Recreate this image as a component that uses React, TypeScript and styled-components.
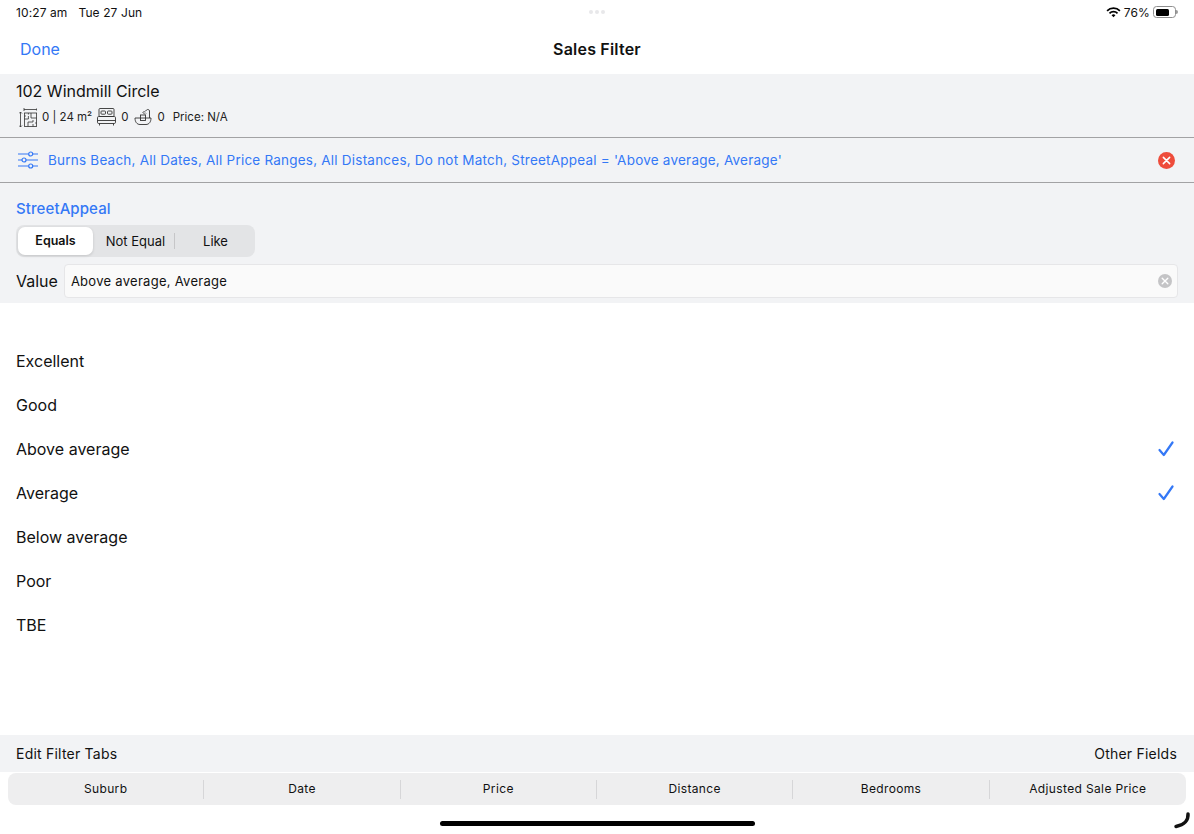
import React from 'react';
import styled, {createGlobalStyle} from 'styled-components';

const BLUE = '#3478f6';
const FONT = 'Inter, "Liberation Sans", sans-serif';

const GlobalStyle = createGlobalStyle`
  html, body {
    margin: 0;
    padding: 0;
    background: #fff;
  }
  body {
    font-family: ${FONT};
    color: #111;
  }
`;

const Screen = styled.div`
  width: 1194px;
  height: 834px;
  display: flex;
  flex-direction: column;
  overflow: hidden;
  position: relative;
`;

const StatusBar = styled.div`
  height: 24px;
  flex: none;
  display: grid;
  grid-template-columns: 1fr auto 1fr;
  align-items: center;
  padding: 0 16px 0 16px;
  font-size: 12px;
  letter-spacing: 0.1px;
`;

const StatusLeft = styled.div`
  display: flex;
  gap: 11px;
`;

const Dots = styled.div`
  display: flex;
  gap: 2px;
`;

const Dot = styled.span`
  width: 4px;
  height: 4px;
  border-radius: 50%;
  background: #e8e8ea;
`;

const StatusRight = styled.div`
  display: flex;
  justify-content: flex-end;
  align-items: center;
  gap: 3px;
`;

const Battery = styled.div`
  width: 23px;
  height: 12px;
  border: 1px solid #8e8e8e;
  border-radius: 3.5px;
  padding: 1.5px;
  box-sizing: border-box;
  margin-right: 2px;
  position: relative;
  &::after {
    content: '';
    position: absolute;
    right: -3px;
    top: 3px;
    width: 2px;
    height: 4px;
    border-radius: 0 2px 2px 0;
    background: #9a9a9a;
  }
`;

const BatteryLevel = styled.div<{$level: number}>`
  height: 100%;
  width: ${p => p.$level}%;
  background: #000;
  border-radius: 1.5px;
`;

const NavBar = styled.div`
  height: 50px;
  flex: none;
  display: grid;
  grid-template-columns: 1fr auto 1fr;
  align-items: center;
  padding: 0 20px;
`;

const DoneButton = styled.span`
  color: ${BLUE};
  font-size: 16px;
`;

const NavTitle = styled.span`
  font-size: 16px;
  font-weight: 600;
  letter-spacing: 0.2px;
`;

const PropertyPanel = styled.div`
  height: 64px;
  flex: none;
  box-sizing: border-box;
  background: #f2f3f5;
  border-bottom: 1px solid #a2a2a4;
  padding: 7px 16px 0 19px;
`;

const Address = styled.div`
  font-size: 16px;
  line-height: 20px;
  margin-left: -3px;
`;

const Specs = styled.div`
  display: flex;
  align-items: center;
  margin-top: 7px;
  height: 18px;
  font-size: 11.500px;
  color: #222;
`;

const SpecText = styled.span<{$gap: number}>`
  margin: 0 ${p => p.$gap}px 0 5px;
`;

const FilterSummary = styled.div`
  height: 45px;
  flex: none;
  box-sizing: border-box;
  background: #f2f3f5;
  border-bottom: 1px solid #a2a2a4;
  display: flex;
  align-items: center;
  padding: 0 19px 0 18px;
  gap: 10px;
`;

const SummaryText = styled.span`
  flex: 1;
  color: ${BLUE};
  font-size: 13.500px;
  letter-spacing: 0.22px;
`;

const ClearIcon = styled.span<{$size: number; $color: string}>`
  width: ${p => p.$size}px;
  height: ${p => p.$size}px;
  border-radius: 50%;
  background: ${p => p.$color};
  display: flex;
  align-items: center;
  justify-content: center;
  flex: none;
`;

const FieldPanel = styled.div`
  height: 120px;
  flex: none;
  box-sizing: border-box;
  background: #f2f3f5;
  padding: 17px 16px 0;
`;

const FieldName = styled.div`
  color: ${BLUE};
  font-size: 15px;
  font-weight: 500;
  line-height: 17px;
  letter-spacing: 0.1px;
`;

const Segments = styled.div`
  margin-top: 8px;
  width: 239px;
  height: 32px;
  box-sizing: border-box;
  background: #e3e4e6;
  border-radius: 8px;
  padding: 2px;
  display: grid;
  grid-template-columns: 75px 82px 78px;
  align-items: center;
`;

const Segment = styled.div<{$active?: boolean; $divider?: boolean}>`
  height: 28px;
  box-sizing: border-box;
  display: flex;
  align-items: center;
  justify-content: center;
  padding-left: ${p => (p.$active ? 0 : 3)}px;
  padding-bottom: 1px;
  font-size: ${p => (p.$active ? 12.5 : 13)}px;
  font-weight: ${p => (p.$active ? 600 : 400)};
  background: ${p => (p.$active ? '#fff' : 'transparent')};
  border-radius: 7px;
  box-shadow: ${p => (p.$active ? '0 1px 3px rgba(0,0,0,0.14)' : 'none')};
  position: relative;
  ${p => p.$divider && `
    &::after {
      content: '';
      position: absolute;
      right: 0;
      top: 6px;
      width: 1px;
      height: 16px;
      background: #c6c6c8;
    }
  `}
`;

const ValueRow = styled.div`
  display: flex;
  align-items: center;
  gap: 6px;
  margin-top: 7px;
`;

const ValueLabel = styled.span`
  font-size: 16px;
`;

const ValueInput = styled.div`
  flex: 1;
  height: 34px;
  box-sizing: border-box;
  background: #fafafa;
  border: 1px solid #e6e6e8;
  border-radius: 4px;
  display: flex;
  align-items: center;
  justify-content: space-between;
  padding: 0 5px 0 6px;
  font-size: 13px;
  letter-spacing: 0.28px;
`;

const Options = styled.div`
  flex: 1;
  padding-top: 36px;
`;

const Option = styled.div`
  height: 44px;
  display: flex;
  align-items: center;
  justify-content: space-between;
  padding: 0 20px 0 16px;
  font-size: 16px;
`;

const FooterBar = styled.div`
  height: 37px;
  flex: none;
  background: #f2f3f5;
  display: flex;
  align-items: center;
  justify-content: space-between;
  padding: 0 17px 0 16px;
  font-size: 14px;
  letter-spacing: 0.22px;
`;

const TabStrip = styled.div`
  margin: 1px 8px 0;
  height: 32px;
  flex: none;
  background: #eeeeef;
  border-radius: 8px;
  display: grid;
  grid-template-columns: repeat(6, 1fr);
  align-items: center;
`;

const Tab = styled.div<{$last?: boolean}>`
  height: 18px;
  display: flex;
  align-items: center;
  justify-content: center;
  font-size: 12px;
  letter-spacing: 0.36px;
  padding-bottom: 1px;
  border-right: ${p => (p.$last ? 'none' : '1px solid #d6d6d8')};
`;

const BottomArea = styled.div`
  height: 29px;
  flex: none;
  display: flex;
  justify-content: center;
  padding-top: 16px;
  box-sizing: border-box;
`;

const HomeIndicator = styled.div`
  width: 315px;
  height: 5px;
  border-radius: 3px;
  background: #000;
`;

const PencilMark = styled.svg`
  position: absolute;
  right: 3px;
  bottom: 4px;
`;

const Wifi = () => (
  <svg width="15" height="11" viewBox="0 0 16 12">
    <path d="M1 4.200a10 10 0 0 1 14 0" fill="none" stroke="#000" strokeWidth="1.900"/>
    <path d="M3.600 6.900a6.300 6.300 0 0 1 8.800 0" fill="none" stroke="#000" strokeWidth="1.900"/>
    <path d="M8 11.200 5.900 9a3 3 0 0 1 4.200 0z" fill="#000"/>
  </svg>
);

const PlanIcon = () => (
  <svg width="18" height="19" viewBox="0 0 18 19" fill="none" stroke="#333" strokeWidth="0.800">
    <path d="M5 1.500h13M5 0v3M18 0v3M1.500 4v15M0 5.500l1.500-1.500 1.500 1.500M0 17.500l1.500 1.500 1.500-1.500"/>
    <rect x="5.400" y="5" width="12.200" height="13.500"/>
    <path d="M5.400 11h4V8M5.400 8h1.500M9.400 5v1.500M12 5v5h5.600M9 18.500V14h5v-2M14 18.500V16M17.600 15h-1.500"/>
  </svg>
);

const BedIcon = () => (
  <svg width="19" height="18" viewBox="0 0 19 18" fill="none" stroke="#333" strokeWidth="0.900">
    <rect x="2" y="0.500" width="15" height="8" rx="1"/>
    <rect x="4" y="3" width="4.500" height="3.200" rx="0.800"/>
    <rect x="10.500" y="3" width="4.500" height="3.200" rx="0.800"/>
    <rect x="0.500" y="8.500" width="18" height="7" rx="1.200"/>
    <path d="M0.500 12.500h18M2.500 15.500v2M16.500 15.500v2"/>
  </svg>
);

const BathIcon = () => (
  <svg width="18" height="18" viewBox="0 0 18 18" fill="none" stroke="#333" strokeWidth="0.900">
    <path d="M1 10h16c0 4-2 6.500-5 6.500H6c-3 0-5-2.500-5-6.500z"/>
    <rect x="6.500" y="7" width="5" height="5.500"/>
    <path d="M15.500 10V3c0-1.500-2-2-3-1l-1.500 1.500M8.500 5l2-2M9.500 6l1.500-1.500M11 6.500l1-1"/>
  </svg>
);

const SlidersIcon = () => (
  <svg width="20" height="18" viewBox="0 0 20 18" fill="none" stroke={BLUE} strokeWidth="1.200" style={{flex: 'none'}}>
    <path d="M0 3h10.500M15 3h5M0 9h4M8 9h12M0 15h10.500M15 15h5"/>
    <circle cx="12.700" cy="3" r="2"/>
    <circle cx="6" cy="9" r="2"/>
    <circle cx="12.700" cy="15" r="2"/>
  </svg>
);

const Cross = ({size}: {size: number}) => (
  <svg width={size} height={size} viewBox="0 0 10 10" stroke="#fff" strokeWidth="1.700" strokeLinecap="round">
    <path d="M1.500 1.500l7 7M8.500 1.500l-7 7"/>
  </svg>
);

const Check = () => (
  <svg width="16" height="16" viewBox="0 0 16 16" fill="none" stroke={BLUE} strokeWidth="2.200" strokeLinecap="round" strokeLinejoin="round">
    <path d="M1.500 9l4.300 5L14.500 1.500"/>
  </svg>
);

const optionRows = [
  {label: 'Excellent'},
  {label: 'Good'},
  {label: 'Above average', checked: true},
  {label: 'Average', checked: true},
  {label: 'Below average'},
  {label: 'Poor'},
  {label: 'TBE'},
];

const tabs = ['Suburb', 'Date', 'Price', 'Distance', 'Bedrooms', 'Adjusted Sale Price'];

export default function App() {
  return (
    <Screen>
      <GlobalStyle/>
      <StatusBar>
        <StatusLeft>
          <span>10:27 am</span>
          <span>Tue 27 Jun</span>
        </StatusLeft>
        <Dots><Dot/><Dot/><Dot/></Dots>
        <StatusRight>
          <Wifi/>
          <span>76%</span>
          <Battery><BatteryLevel $level={76}/></Battery>
        </StatusRight>
      </StatusBar>
      <NavBar>
        <DoneButton>Done</DoneButton>
        <NavTitle>Sales Filter</NavTitle>
      </NavBar>
      <PropertyPanel>
        <Address>102 Windmill Circle</Address>
        <Specs>
          <PlanIcon/>
          <SpecText $gap={5}>0 | 24 m²</SpecText>
          <BedIcon/>
          <SpecText $gap={6}>0</SpecText>
          <BathIcon/>
          <SpecText $gap={8}>0</SpecText>
          <span>Price: N/A</span>
        </Specs>
      </PropertyPanel>
      <FilterSummary>
        <SlidersIcon/>
        <SummaryText>Burns Beach, All Dates, All Price Ranges, All Distances, Do not Match, StreetAppeal = 'Above average, Average'</SummaryText>
        <ClearIcon $size={17} $color="#ee4c3b"><Cross size={9}/></ClearIcon>
      </FilterSummary>
      <FieldPanel>
        <FieldName>StreetAppeal</FieldName>
        <Segments>
          <Segment $active>Equals</Segment>
          <Segment $divider>Not Equal</Segment>
          <Segment>Like</Segment>
        </Segments>
        <ValueRow>
          <ValueLabel>Value</ValueLabel>
          <ValueInput>
            <span>Above average, Average</span>
            <ClearIcon $size={14} $color="#c4c4c6"><Cross size={8}/></ClearIcon>
          </ValueInput>
        </ValueRow>
      </FieldPanel>
      <Options>
        {optionRows.map(row => (
          <Option key={row.label}>
            <span>{row.label}</span>
            {row.checked && <Check/>}
          </Option>
        ))}
      </Options>
      <FooterBar>
        <span>Edit Filter Tabs</span>
        <span>Other Fields</span>
      </FooterBar>
      <TabStrip>
        {tabs.map((tab, i) => (
          <Tab key={tab} $last={i === tabs.length - 1}>{tab}</Tab>
        ))}
      </TabStrip>
      <BottomArea>
        <HomeIndicator/>
      </BottomArea>
      <PencilMark width="18" height="18" viewBox="0 0 18 18">
        <path d="M15 2c.5 6-3.500 11-12 12.500" fill="none" stroke="#111" strokeWidth="3.500" strokeLinecap="round"/>
      </PencilMark>
    </Screen>
  );
}
